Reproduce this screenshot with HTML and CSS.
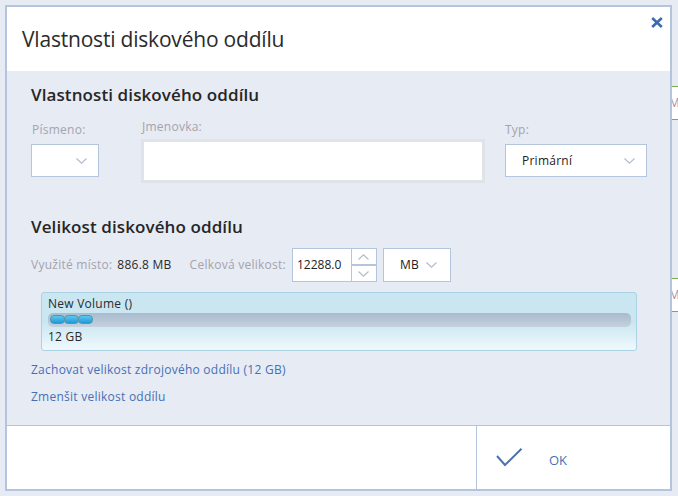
FILE: index.html
```html
<!DOCTYPE html>
<html lang="cs">
<head>
<meta charset="utf-8">
<title>Vlastnosti diskového oddílu</title>
<link rel="stylesheet" href="styles.css">
</head>
<body>
<div class="bg-item bg-item-top">M</div>
<div class="bg-item bg-item-mid">M</div>
<div class="dialog">
  <header class="dlg-header">
    <h1 class="dlg-title">Vlastnosti diskového oddílu</h1>
    <button class="close" aria-label="Zavřít">
      <svg width="12" height="11" viewBox="0 0 12 11"><path d="M1.2 1 L10.8 10 M10.8 1 L1.2 10" stroke="#3d6bb0" stroke-width="2.6" fill="none"/></svg>
    </button>
  </header>
  <main class="dlg-body">
    <h2 class="section-title">Vlastnosti diskového oddílu</h2>
    <div class="fields">
      <div class="field field-letter">
        <span class="field-label">Písmeno:</span>
        <div class="select">
          <span class="select-value"></span>
          <svg class="chev" width="11" height="6" viewBox="0 0 11 6"><polyline points="0.5,0.5 5.5,5.2 10.5,0.5" fill="none" stroke="#b4bccb" stroke-width="1.2"/></svg>
        </div>
      </div>
      <div class="field field-name">
        <span class="field-label">Jmenovka:</span>
        <div class="text-input"></div>
      </div>
      <div class="field field-type">
        <span class="field-label">Typ:</span>
        <div class="select">
          <span class="select-value">Primární</span>
          <svg class="chev" width="11" height="6" viewBox="0 0 11 6"><polyline points="0.5,0.5 5.5,5.2 10.5,0.5" fill="none" stroke="#b4bccb" stroke-width="1.2"/></svg>
        </div>
      </div>
    </div>

    <h2 class="section-title section-size">Velikost diskového oddílu</h2>
    <div class="size-row">
      <span class="muted">Využité místo:</span>
      <span class="value">886.8 MB</span>
      <span class="muted total-label">Celková velikost:</span>
      <div class="spin">
        <div class="spin-input">12288.0</div>
        <div class="spin-buttons">
          <div class="spin-btn"><svg width="11" height="6" viewBox="0 0 11 6"><polyline points="0.5,5.5 5.5,0.8 10.5,5.5" fill="none" stroke="#b4bccb" stroke-width="1.2"/></svg></div>
          <div class="spin-btn"><svg width="11" height="6" viewBox="0 0 11 6"><polyline points="0.5,0.5 5.5,5.2 10.5,0.5" fill="none" stroke="#b4bccb" stroke-width="1.2"/></svg></div>
        </div>
      </div>
      <div class="select select-unit">
        <span class="select-value">MB</span>
        <svg class="chev" width="11" height="6" viewBox="0 0 11 6"><polyline points="0.5,0.5 5.5,5.2 10.5,0.5" fill="none" stroke="#b4bccb" stroke-width="1.2"/></svg>
      </div>
    </div>

    <div class="volume">
      <div class="vol-name">New Volume ()</div>
      <div class="track">
        <span class="seg"></span><span class="seg"></span><span class="seg"></span>
      </div>
      <div class="vol-size">12 GB</div>
    </div>

    <a class="link" href="#">Zachovat velikost zdrojového oddílu (12 GB)</a>
    <a class="link" href="#">Zmenšit velikost oddílu</a>
  </main>
  <footer class="dlg-footer">
    <div class="footer-spacer"></div>
    <button class="ok">
      <svg class="check" width="27" height="19" viewBox="0 0 27 19"><polyline points="1,8 9,17 25.5,0.8" fill="none" stroke="#4c72ae" stroke-width="2"/></svg>
      <span class="ok-label">OK</span>
    </button>
  </footer>
</div>
</body>
</html>
```

FILE: styles.css
```css
* { box-sizing: border-box; }
html, body { margin: 0; }
body {
  width: 678px;
  height: 496px;
  overflow: hidden;
  position: relative;
  padding: 5px;
  background: #e7ebf4;
  font-family: "Open Sans", "Noto Sans", sans-serif;
}

.bg-item {
  position: absolute;
  left: 660px;
  width: 40px;
  height: 34px;
  border-top: 1px solid #7bab4f;
  border-bottom: 1px solid #7bab4f;
  background: #fff;
  padding-left: 9px;
  font-size: 12px;
  line-height: 32px;
  color: #a0909c;
}
.bg-item-top { top: 86px; }
.bg-item-mid { top: 278px; }

.dialog {
  position: relative;
  z-index: 1;
  width: 667px;
  height: 486px;
  border: 2px solid #b4c4dc;
  background: #e7ebf4;
  display: flex;
  flex-direction: column;
}

.dlg-header {
  flex: none;
  height: 64px;
  background: #fff;
  display: flex;
  justify-content: space-between;
  align-items: flex-start;
}
.dlg-title {
  margin: 0;
  padding: 18px 0 0 15px;
  font-size: 21px;
  line-height: 28px;
  font-weight: 400;
  letter-spacing: -0.2px;
  color: #2b2b2b;
}
.close {
  margin: 10px 7px 0 0;
  padding: 0;
  border: 0;
  background: none;
  width: 12px;
  height: 11px;
  display: flex;
}

.dlg-body {
  flex: 1;
  padding: 13px 24px 0 24px;
  display: flex;
  flex-direction: column;
  align-items: flex-start;
  letter-spacing: 0.25px;
}
.section-title {
  margin: 0;
  font-size: 17px;
  line-height: 22px;
  font-weight: 600;
  letter-spacing: 0.1px;
  color: #262626;
}

.fields {
  display: flex;
  margin-top: 13px;
}
.field {
  display: flex;
  flex-direction: column;
}
.field-label {
  font-size: 12px;
  line-height: 16px;
  color: #a4a3ae;
  padding-left: 1px;
  margin-bottom: 6px;
}
.field-letter { width: 68px; padding-top: 3px; }
.field-name { width: 344px; margin-left: 42px; }
.field-name .field-label { margin-bottom: 4px; }
.field-type { width: 142px; margin-left: 20px; padding-top: 3px; }
.field-type .field-label { padding-left: 0; }

.select {
  height: 33px;
  border: 1px solid #b5c5de;
  background: #fff;
  display: flex;
  align-items: center;
  justify-content: space-between;
  padding: 0 11px 0 16px;
}
.select-value {
  font-size: 12px;
  line-height: 16px;
  color: #222;
}
.chev { display: block; flex: none; }

.text-input {
  height: 44px;
  border: 3px solid #e0e3e7;
  background: #fff;
}

.section-size { margin-top: 33px; }

.size-row {
  display: flex;
  align-items: center;
  margin-top: 10px;
  height: 34px;
  font-size: 12px;
  line-height: 16px;
}
.muted { color: #a4a3ae; }
.value { color: #2a2a2a; margin-left: 5px; }
.total-label { margin-left: 18px; }

.spin {
  display: flex;
  margin-left: 6px;
}
.spin-input {
  width: 60px;
  height: 34px;
  border: 1px solid #b5c5de;
  background: #fff;
  padding-left: 4px;
  display: flex;
  align-items: center;
  color: #222;
  letter-spacing: 0;
}
.spin-buttons {
  width: 26px;
  margin-left: -1px;
  display: flex;
  flex-direction: column;
}
.spin-btn {
  height: 17px;
  border: 1px solid #b5c5de;
  background: #fff;
  display: flex;
  align-items: center;
  justify-content: center;
}
.spin-btn svg { display: block; }

.select-unit {
  width: 68px;
  height: 34px;
  margin-left: 6px;
  padding: 0 13px 0 16px;
}

.volume {
  margin: 10px 0 0 10px;
  width: 596px;
  height: 59px;
  border: 1px solid #a9d3e5;
  border-radius: 3px;
  background: linear-gradient(#c9e6f1 0%, #c9e6f1 50%, #f0f9fc 100%);
  padding: 3px 5px 0 6px;
}
.vol-name, .vol-size {
  font-size: 12px;
  line-height: 16px;
  color: #2b2b2b;
}
.track {
  margin-top: 1px;
  height: 14px;
  border-radius: 5px;
  background: linear-gradient(#a9bbcf, #c4d1de);
  padding: 2px 0 0 2px;
  display: flex;
}
.seg {
  width: 15px;
  height: 9px;
  border: 1px solid #4b98b0;
  border-radius: 4px;
  background: linear-gradient(#5ec7f0, #1e9ad8);
}
.seg + .seg { margin-left: -1px; }
.vol-size { margin-top: 2px; }

.link {
  margin-top: 11px;
  font-size: 12px;
  line-height: 16px;
  color: #4670b4;
  text-decoration: none;
}

.dlg-footer {
  flex: none;
  height: 64px;
  border-top: 1px solid #b4c4dc;
  background: #fff;
  display: flex;
}
.footer-spacer {
  width: 470px;
  border-right: 1px solid #b4c4dc;
}
.ok {
  flex: 1;
  display: flex;
  align-items: center;
  padding: 0 0 0 19px;
  border: 0;
  background: none;
  font-family: inherit;
}
.check { display: block; }
.ok-label {
  margin-left: 26px;
  padding-top: 5px;
  font-size: 13px;
  line-height: 16px;
  color: #4672b5;
}
```
